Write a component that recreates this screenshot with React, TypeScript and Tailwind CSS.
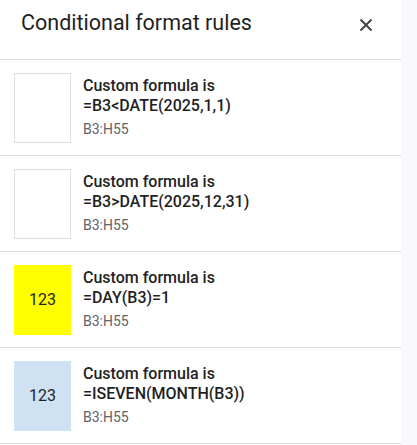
const rules = [
  { formula: "=B3<DATE(2025,1,1)", range: "B3:H55", swatch: "bg-white border border-[#dadce0]", sample: "" },
  { formula: "=B3>DATE(2025,12,31)", range: "B3:H55", swatch: "bg-white border border-[#dadce0]", sample: "" },
  { formula: "=DAY(B3)=1", range: "B3:H55", swatch: "bg-[#ffff00]", sample: "123" },
  { formula: "=ISEVEN(MONTH(B3))", range: "B3:H55", swatch: "bg-[#cfe2f3]", sample: "123" },
];

export default function App() {
  return (
    <div className="flex h-[445px] w-[417px] bg-[#f8f9fc] font-['Roboto',sans-serif] text-[#1f1f1f]">
      <div className="w-[401px] h-full bg-white">
        {/* Header */}
        <div className="flex items-start justify-between h-[60px] pl-[21px] pr-[28px] pt-[12px] border-b border-[#dadce0]">
          <h2 className="text-[21.5px] leading-none">Conditional format rules</h2>
          <svg className="mt-[6px] w-[14px] h-[14px] text-[#444746]" viewBox="0 0 14 14" fill="none" stroke="currentColor" strokeWidth={2}>
            <path d="M1.5 1.5l11 11M12.5 1.5l-11 11" />
          </svg>
        </div>

        {/* Rules */}
        {rules.map((rule) => (
          <div key={rule.formula} className="flex items-center gap-3 h-[96px] pl-[14px] border-b border-[#dadce0]">
            <div className={`shrink-0 w-[57px] h-[70px] flex items-center justify-center text-[16px] ${rule.swatch}`}>
              {rule.sample}
            </div>
            <div className="flex flex-col">
              <p className="text-[16px] leading-[20px] font-medium">Custom formula is</p>
              <p className="text-[16px] leading-[20px] font-medium">{rule.formula}</p>
              <p className="text-[14px] leading-[20px] mt-[3px] text-[#5f6368]">{rule.range}</p>
            </div>
          </div>
        ))}
      </div>
    </div>
  );
}
